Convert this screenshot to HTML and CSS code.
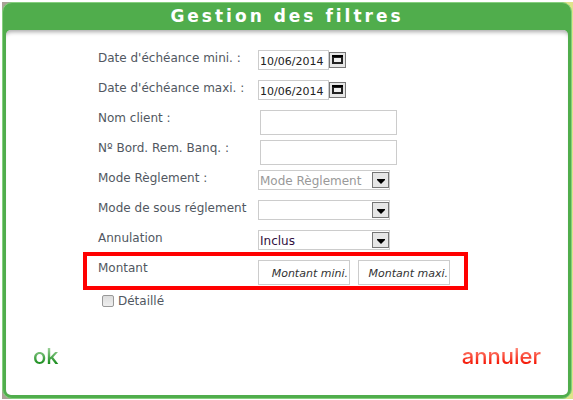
FILE: index.html
```html
<!DOCTYPE html>
<html lang="fr">
<head>
    <meta charset="UTF-8">
    <meta name="viewport" content="width=device-width, initial-scale=1.0">
    <title>Gestion des filtres</title>
    <link rel="stylesheet" href="styles.css">
</head>
<body>
    <div class="backdrop">
        <form class="dialog">
            <h1>Gestion des filtres</h1>
            <div class="content">
                <div class="fields">
                    <!-- Dates d'échéance -->
                    <div class="row">
                        <label for="date-mini">Date d'échéance mini. :</label>
                        <input class="date" type="text" id="date-mini" value="10/06/2014">
                        <button class="picker" type="button" aria-label="Choisir la date mini">
                            <svg width="11" height="10" viewBox="0 0 11 10"><path d="M0 1h11v8H0z" fill="#222"/><path d="M0 0h11v2H0z" fill="#000"/><path d="M2 3h7v4H2z" fill="#eee"/></svg>
                        </button>
                    </div>
                    <div class="row">
                        <label for="date-maxi">Date d'échéance maxi. :</label>
                        <input class="date" type="text" id="date-maxi" value="10/06/2014">
                        <button class="picker" type="button" aria-label="Choisir la date maxi">
                            <svg width="11" height="10" viewBox="0 0 11 10"><path d="M0 1h11v8H0z" fill="#222"/><path d="M0 0h11v2H0z" fill="#000"/><path d="M2 3h7v4H2z" fill="#eee"/></svg>
                        </button>
                    </div>
                    <div class="row">
                        <label for="client">Nom client :</label>
                        <input class="text" type="text" id="client">
                    </div>
                    <div class="row">
                        <label for="bordereau">Nº Bord. Rem. Banq. :</label>
                        <input class="text" type="text" id="bordereau">
                    </div>
                    <!-- Listes -->
                    <div class="row">
                        <label for="mode">Mode Règlement :</label>
                        <div class="select">
                            <select class="empty" id="mode"><option>Mode Règlement</option></select>
                            <span class="arrow"><svg width="8" height="5" viewBox="0 0 8 5"><path d="M0 0h8v1L4 5 0 1z"/></svg></span>
                        </div>
                    </div>
                    <div class="row">
                        <label for="sous-mode">Mode de sous réglement</label>
                        <div class="select">
                            <select id="sous-mode"><option></option></select>
                            <span class="arrow"><svg width="8" height="5" viewBox="0 0 8 5"><path d="M0 0h8v1L4 5 0 1z"/></svg></span>
                        </div>
                    </div>
                    <div class="row">
                        <label for="annulation">Annulation</label>
                        <div class="select">
                            <select class="chosen" id="annulation"><option>Inclus</option></select>
                            <span class="arrow"><svg width="8" height="5" viewBox="0 0 8 5"><path d="M0 0h8v1L4 5 0 1z"/></svg></span>
                        </div>
                    </div>
                    <div class="row highlight">
                        <label for="montant-mini">Montant</label>
                        <input class="amount" type="text" id="montant-mini" placeholder="Montant mini.">
                        <input class="amount" type="text" placeholder="Montant maxi." aria-label="Montant maxi.">
                    </div>
                    <div class="check">
                        <input type="checkbox" id="detail">
                        <label for="detail">Détaillé</label>
                    </div>
                </div>
                <div class="actions">
                    <button class="ok" type="submit">ok</button>
                    <button class="cancel" type="button">annuler</button>
                </div>
            </div>
        </form>
    </div>
</body>
</html>
```
FILE: styles.css
```css
* {
    box-sizing: border-box;
}
body {
    margin: 0;
    padding: 2px 0 0 2px;
    font-family: Verdana, "DejaVu Sans", sans-serif;
    font-size: 12px;
    color: #515761;
    background-color: white;
}
.backdrop {
    padding-right: 1px;
    background: linear-gradient(to right, #a9a196, #b5b0a0 50%, #dfe48b);
}
.dialog {
    display: flex;
    flex-direction: column;
    min-height: calc(100vh - 3px);
    padding: 0 3px 3px;
    border: 1px solid #86cf7f;
    border-radius: 10px;
    background-color: #50ad4c;
}
h1 {
    margin: 0;
    font-size: 17px;
    line-height: 27px;
    letter-spacing: 3px;
    text-align: center;
    color: white;
}
.content {
    display: flex;
    flex: 1;
    flex-direction: column;
    padding: 20px 27px;
    border-radius: 5px;
    background-color: white;
    box-shadow: inset 0 5px 4px -3px #aaa;
}
.fields {
    width: 378px;
    max-width: 100%;
    margin: 0 auto;
}
.row {
    position: relative;
    display: flex;
    align-items: flex-start;
    height: 30px;
}
.row label {
    width: 160px;
    line-height: 16px;
    white-space: nowrap;
}
input, select {
    margin: 0;
    border: 1px solid #ccc;
    border-radius: 0;
    font-family: inherit;
    font-size: 11px;
    color: #222;
    background-color: white;
}
.date {
    width: 71px;
    height: 20px;
    padding: 2px 1px 0;
}
.picker {
    display: flex;
    align-items: center;
    justify-content: center;
    width: 17px;
    height: 16px;
    margin: 2px 0 0;
    padding: 0;
    border: 1px solid #777;
    background-color: #e6e6e6;
}
.text {
    width: 137px;
    height: 25px;
    margin-left: 2px;
}
.select {
    position: relative;
    width: 132px;
}
select {
    display: block;
    width: 100%;
    height: 20px;
    padding: 1px 20px 0 1px;
    appearance: none;
    font-size: 12px;
}
.empty {
    color: #999;
}
.chosen {
    color: #301040;
}
.arrow {
    position: absolute;
    top: 2px;
    right: 1px;
    display: flex;
    align-items: center;
    justify-content: center;
    width: 17px;
    height: 16px;
    padding-top: 2px;
    border: 1px solid #777;
    background-color: #e6e6e6;
    pointer-events: none;
}
.amount {
    width: 92px;
    height: 25px;
    margin-right: 8px;
    padding: 2px 1px 0;
    font-style: italic;
    text-align: right;
}
.amount::placeholder {
    color: #333;
}
/* cadre rouge autour du montant */
.highlight::after {
    content: "";
    position: absolute;
    top: -8px;
    right: 8px;
    bottom: 0;
    left: -15px;
    border: 4px solid red;
    pointer-events: none;
}
.check {
    display: flex;
    align-items: center;
    gap: 4px;
    padding: 2px 4px;
}
.check input {
    width: 12px;
    height: 12px;
    border: 1px solid #999;
    border-radius: 2px;
    appearance: none;
    background: linear-gradient(#ddd, #eee);
}
.check input:checked {
    background: #50ad4c;
}
.check label {
    line-height: 18px;
}
.actions {
    display: flex;
    justify-content: space-between;
    margin-top: 30px;
}
.actions button {
    padding: 0;
    border: none;
    font-family: Inter, sans-serif;
    font-size: 22px;
    font-weight: 500;
    line-height: 28px;
    color: transparent;
    background-clip: text;
    -webkit-background-clip: text;
    cursor: pointer;
}
.ok {
    background-image: linear-gradient(#9fd39c 20%, #148a18 80%);
}
.cancel {
    background-image: linear-gradient(#ff8a7a 20%, #f41200 80%);
}
```
